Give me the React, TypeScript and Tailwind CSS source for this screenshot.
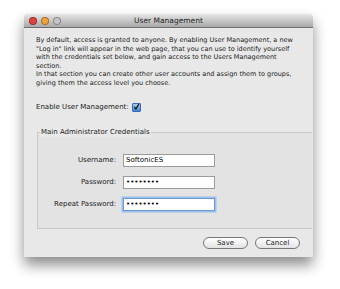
import React from "react";

const font = { fontFamily: '"Lucida Grande", "DejaVu Sans", "Liberation Sans", sans-serif' };

function Light({ color }: { color: string }) {
  return <span className={`w-[8px] h-[8px] rounded-full border border-black/30 ${color}`} />;
}

function Field({ label, value, focus }: { label: string; value: string; focus?: boolean }) {
  return (
    <div className="flex items-center">
      <span className="w-[85px] text-right pr-[7px] text-[7px] text-[#222]">{label}</span>
      <div
        className={`w-[92px] h-[13px] bg-white border flex items-center px-[2px] text-[7px] text-black ${
          focus ? "border-[#6b9ad6] shadow-[0_0_0_1.5px_#9cbfeb]" : "border-[#9a9a9a]"
        }`}
      >
        {value}
      </div>
    </div>
  );
}

export default function App() {
  return (
    <div className="w-[340px] h-[289px] bg-white pt-[14px] pl-[24px]" style={font}>
      <div className="w-[289px] h-[243px] bg-[#e8e8e8] rounded-t-[4px] shadow-[0_8px_14px_rgba(0,0,0,0.45)] flex flex-col">
        {/* title bar */}
        <div className="h-[14px] relative flex items-center rounded-t-[4px] bg-gradient-to-b from-[#e6e6e6] to-[#a9a9a9] border-b border-[#6f6f6f]">
          <div className="flex gap-[4px] pl-[5px]">
            <Light color="bg-[#e0413a]" />
            <Light color="bg-[#f0a23a]" />
            <Light color="bg-[#c4c4c4]" />
          </div>
          <span className="absolute left-0 right-0 text-center text-[7.5px] text-[#222]">User Management</span>
        </div>

        <div className="px-[12px] pt-[8px] text-[6.5px] leading-[8.5px] text-[#1a1a1a]">
          <p>
            By default, access is granted to anyone. By enabling User Management, a new "Log in" link will appear
            in the web page, that you can use to identify yourself with the credentials set below, and gain access
            to the Users Management section.
          </p>
          <p>
            In that section you can create other user accounts and assign them to groups, giving them the access
            level you choose.
          </p>
        </div>

        <div className="flex items-center gap-[3px] px-[12px] mt-[15px] text-[7px] text-[#1a1a1a]">
          <span>Enable User Management:</span>
          <span className="w-[9px] h-[9px] rounded-[1px] bg-gradient-to-b from-[#a6cbf2] to-[#3f87d9] border border-[#3a6bb0] flex items-center justify-center">
            <svg width="8" height="8" viewBox="0 0 8 8">
              <path d="M1.5 4 L3.3 6.2 L6.8 0.8" fill="none" stroke="#111" strokeWidth="1.4" />
            </svg>
          </span>
        </div>

        <div className="relative ml-[13px] mr-[1px] mt-[19px] h-[97px] border border-[#c8c8c8] border-r-0 bg-[#e3e3e3]">
          <span className="absolute -top-[5px] left-[2px] bg-[#e8e8e8] px-[1px] text-[7px] leading-[9px] text-[#1a1a1a]">
            Main Administrator Credentials
          </span>
          <div className="flex flex-col gap-[9px] pt-[21px]">
            <Field label="Username:" value="SoftonicES" />
            <Field label="Password:" value="••••••••" />
            <Field label="Repeat Password:" value="••••••••" focus />
          </div>
        </div>

        <div className="flex justify-end gap-[7px] pr-[13px] mt-[8px]">
          <button className="w-[45px] h-[12px] rounded-full border border-[#777] bg-gradient-to-b from-white to-[#e2e2e2] text-[7px] leading-[10px] text-[#222]">
            Save
          </button>
          <button className="w-[45px] h-[12px] rounded-full border border-[#777] bg-gradient-to-b from-white to-[#e2e2e2] text-[7px] leading-[10px] text-[#222]">
            Cancel
          </button>
        </div>
      </div>
    </div>
  );
}
